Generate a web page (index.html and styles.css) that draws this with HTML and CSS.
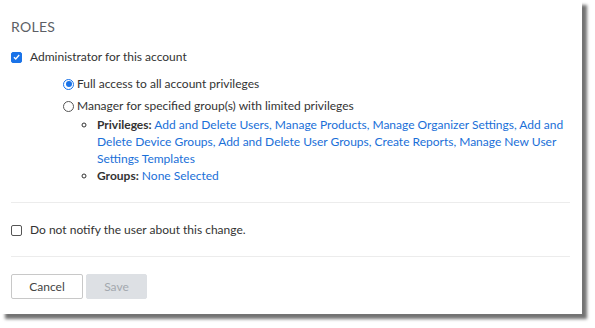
FILE: index.html
```html
<!DOCTYPE html>
<html>
<head>
<meta charset="utf-8">
<link rel="stylesheet" href="styles.css">
</head>
<body>
<div class="panel">
  <div class="title">ROLES</div>
  <label class="check-row admin">
    <span class="cb checked"><svg viewBox="0 0 12 12" width="12" height="12"><path d="M2.6 6.2 L5 8.6 L9.6 3.4" fill="none" stroke="#fff" stroke-width="1.8"/></svg></span>
    <span>Administrator for this account</span>
  </label>
  <div class="options">
    <div class="radio-row"><span class="rb on"></span><span>Full access to all account privileges</span></div>
    <div class="radio-row"><span class="rb"></span><span>Manager for specified group(s) with limited privileges</span></div>
    <ul class="details">
      <li><b>Privileges:</b> <a>Add and Delete Users, Manage Products, Manage Organizer Settings, Add and Delete Device Groups, Add and Delete User Groups, Create Reports, Manage New User Settings Templates</a></li>
      <li><b>Groups:</b> <a>None Selected</a></li>
    </ul>
  </div>
  <div class="sep first"></div>
  <label class="check-row notify">
    <span class="cb"></span>
    <span>Do not notify the user about this change.</span>
  </label>
  <div class="sep second"></div>
  <div class="buttons">
    <button class="btn cancel">Cancel</button>
    <button class="btn save">Save</button>
  </div>
</div>
</body>
</html>
```
FILE: styles.css
```css
html, body {
  margin: 0;
  padding: 0;
  background: #fff;
}
body {
  font-family: Lato, "Open Sans", sans-serif;
  font-size: 12px;
  color: #333;
  min-height: 328px;
}
.panel {
  width: 582px;
  height: 314px;
  box-sizing: border-box;
  background: #fff;
  padding: 19px 12px 0 11px;
  box-shadow: 5px 5px 3px rgba(0, 0, 0, 0.55);
}
.title {
  font-size: 14px;
  line-height: 16px;
  color: #5c5f66;
  letter-spacing: 0.3px;
}
.check-row {
  display: flex;
  align-items: center;
  line-height: 16px;
}
.admin {
  margin-top: 14px;
}
.cb {
  width: 11px;
  height: 11px;
  box-sizing: border-box;
  border: 1px solid #555;
  border-radius: 2px;
  margin-right: 8px;
  display: flex;
  align-items: center;
  justify-content: center;
  background: #fff;
}
.cb.checked {
  background: #1a73e8;
  border-color: #1a73e8;
}
.cb svg {
  width: 10px;
  height: 10px;
}
.options {
  padding-left: 52px;
  margin-top: 11px;
}
.radio-row {
  display: flex;
  align-items: center;
  line-height: 16px;
  margin-bottom: 6px;
}
.rb {
  width: 11px;
  height: 11px;
  box-sizing: border-box;
  border: 1px solid #555;
  border-radius: 50%;
  margin-right: 3px;
  background: #fff;
  position: relative;
}
.rb.on {
  border-color: #1a73e8;
  border-width: 1px;
}
.rb.on::after {
  content: "";
  position: absolute;
  left: 1.5px;
  top: 1.5px;
  width: 6px;
  height: 6px;
  border-radius: 50%;
  background: #1a73e8;
}
.details {
  margin: -4px 0 0 0;
  padding-left: 34px;
  list-style: circle;
  line-height: 17px;
  width: 470px;
}
.details b {
  font-weight: bold;
  color: #333;
}
.details a {
  color: #1a6fd8;
}
.sep {
  height: 1px;
  background: #ececec;
}
.first {
  margin-top: 18px;
}
.notify {
  margin-top: 19px;
}
.second {
  margin-top: 18px;
}
.buttons {
  display: flex;
  gap: 3px;
  margin-top: 17px;
}
.btn {
  font-family: Lato, "Open Sans", sans-serif;
  font-size: 12px;
  height: 25px;
  border-radius: 2px;
  padding: 0;
}
.cancel {
  width: 72px;
  background: #fff;
  border: 1px solid #c8c8c8;
  color: #444;
}
.save {
  width: 61px;
  background: #dde0e4;
  border: 1px solid #dde0e4;
  color: #a3a8ae;
}
```
